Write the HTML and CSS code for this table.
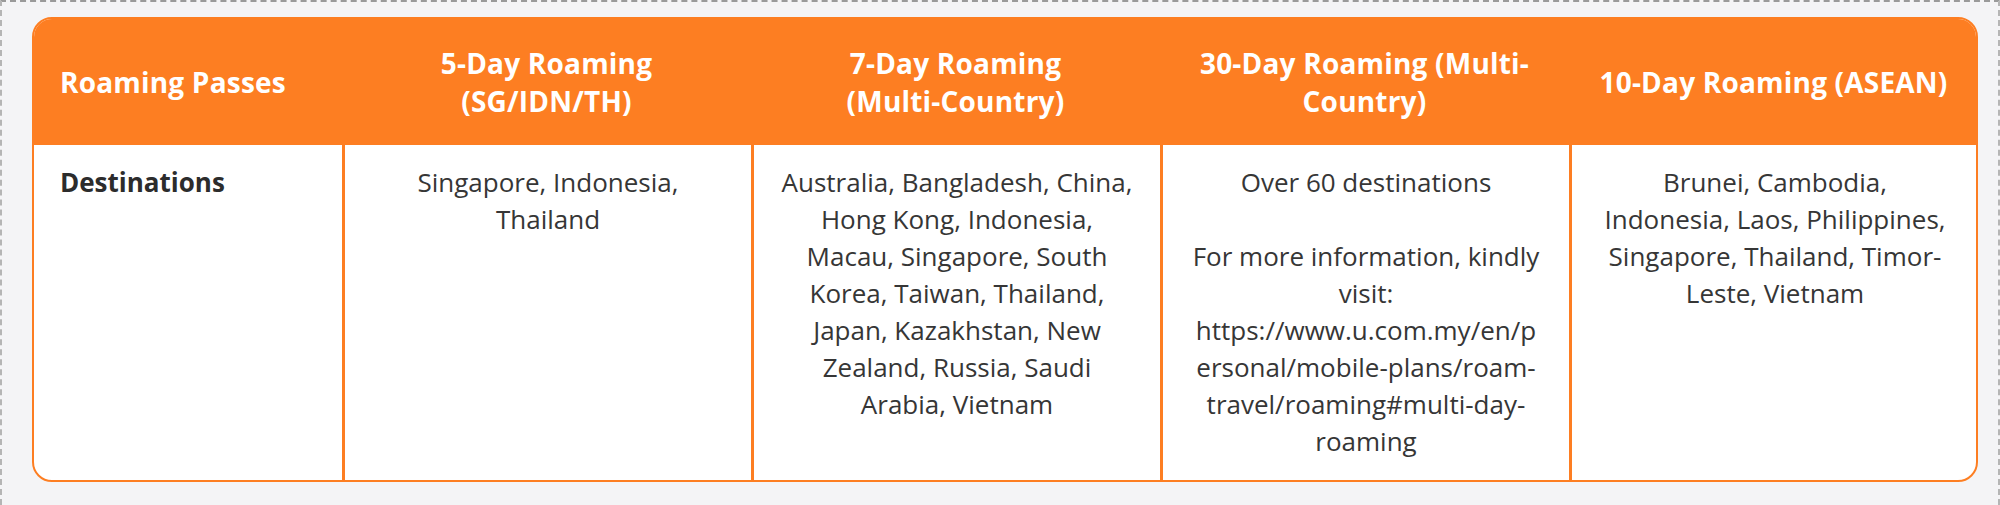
FILE: index.html
```html
<!DOCTYPE html>
<html lang="en">
<head>
<meta charset="utf-8">
<title>Roaming Passes</title>
<link rel="stylesheet" href="styles.css">
</head>
<body>
<div class="frame">
  <div class="table-wrap">
    <table class="roam">
      <thead>
        <tr>
          <th class="first">Roaming Passes</th>
          <th>5-Day Roaming<br>(SG/IDN/TH)</th>
          <th>7-Day Roaming<br>(Multi-Country)</th>
          <th>30-Day Roaming (Multi-Country)</th>
          <th>10-Day Roaming (ASEAN)</th>
        </tr>
      </thead>
      <tbody>
        <tr>
          <td class="first">Destinations</td>
          <td>Singapore, Indonesia, Thailand</td>
          <td>Australia, Bangladesh, China, Hong Kong, Indonesia, Macau, Singapore, South Korea, Taiwan, Thailand, Japan, Kazakhstan, New Zealand, Russia, Saudi Arabia, Vietnam</td>
          <td>Over 60 destinations<br><br>For more information, kindly visit: <span class="url">https://www.u.com.my/en/personal/mobile-plans/roam-travel/roaming#multi-day-roaming</span></td>
          <td>Brunei, Cambodia, Indonesia, Laos, Philippines, Singapore, Thailand, Timor-Leste, Vietnam</td>
        </tr>
      </tbody>
    </table>
  </div>
</div>
</body>
</html>
```
FILE: styles.css
```css
html, body {
  margin: 0;
  padding: 0;
  background: #f4f4f6;
}
body {
  font-family: "Open Sans", Lato, sans-serif;
  color: #363636;
}
.frame {
  height: 505px;
  box-sizing: border-box;
  border-top: 2px dashed #9a9a9a;
  border-left: 2px dashed #b5b5b5;
  border-right: 2px dashed #b5b5b5;
  padding: 15px 20px 0 30px;
}
.table-wrap {
  width: 1946px;
  box-sizing: border-box;
  border: 2px solid #fd7e22;
  border-radius: 20px;
  overflow: hidden;
  background: #ffffff;
}
.roam {
  width: 100%;
  border-collapse: separate;
  border-spacing: 0;
  table-layout: fixed;
}
.roam th {
  background: #fd7e22;
  color: #ffffff;
  font-weight: 700;
  font-size: 28px;
  letter-spacing: 0.2px;
  line-height: 38px;
  height: 126px;
  padding: 0 20px;
  text-align: center;
  vertical-align: middle;
  width: 409px;
  box-sizing: border-box;
}
.roam th.first {
  width: 308px;
  text-align: left;
  padding-left: 26px;
}
.roam td {
  font-size: 26px;
  line-height: 37px;
  padding: 19px 27px 20px;
  text-align: center;
  vertical-align: top;
  border-left: 3px solid #fd7e22;
}
.roam td.first {
  border-left: none;
  text-align: left;
  font-weight: 700;
  padding-left: 26px;
  color: #2c2c2c;
}
.url {
  overflow-wrap: anywhere;
}
```
